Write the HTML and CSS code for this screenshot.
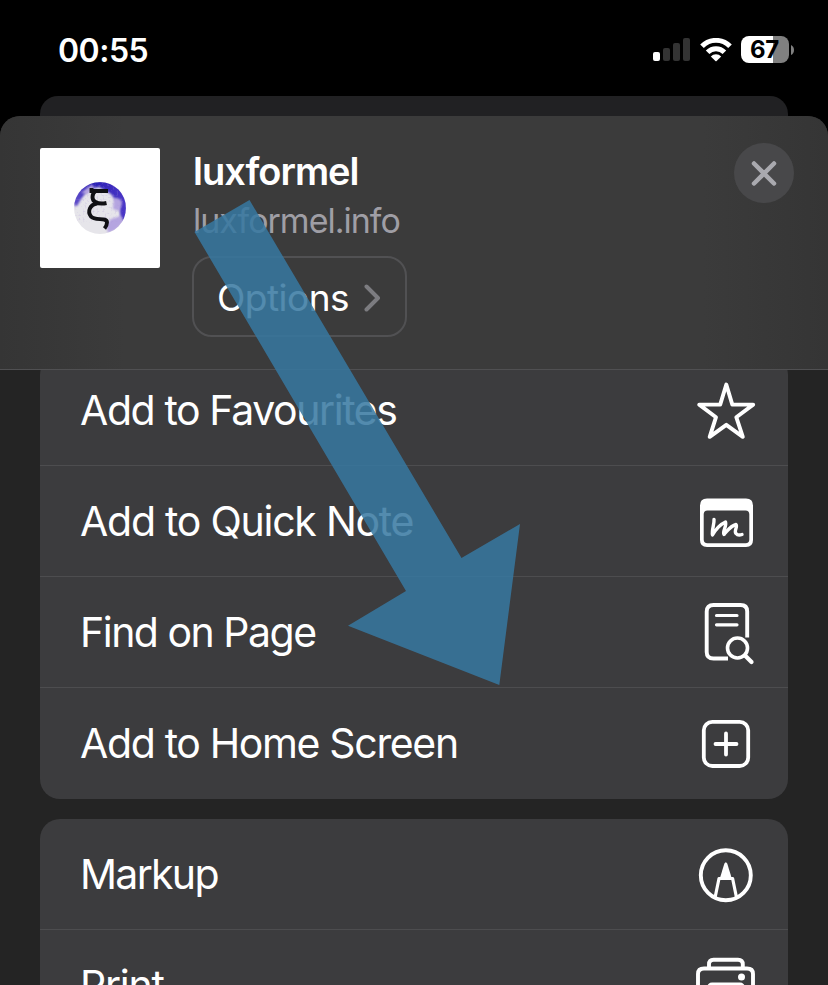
FILE: index.html
```html
<!DOCTYPE html>
<html lang="en">
<head>
<meta charset="utf-8">
<title>Share sheet</title>
<link rel="stylesheet" href="styles.css">
</head>
<body>
<div class="screen">
  <div class="status">
    <span class="time">00:55</span>
    <div class="indicators">
      <svg class="signal" width="38" height="24" viewBox="0 0 38 24">
        <rect x="0" y="14" width="7" height="9" rx="2" fill="#fff"/>
        <rect x="10" y="10" width="7" height="13" rx="2" fill="#333"/>
        <rect x="20" y="5" width="7" height="18" rx="2" fill="#333"/>
        <rect x="30" y="0" width="7" height="23" rx="2" fill="#333"/>
      </svg>
      <svg class="wifi" width="32" height="24" viewBox="0 0 32 24">
        <g fill="none" stroke="#fff" stroke-width="5">
          <path d="M2 8.300a19.500 19.500 0 0 1 28 0"/>
          <path d="M7.600 14.300a11.800 11.800 0 0 1 16.800 0"/>
        </g>
        <path d="M10.800 18.500a7.400 7.400 0 0 1 10.400 0L16.600 23.100q-.6.5-1.200 0Z" fill="#fff"/>
      </svg>
      <div class="battery"><span class="level">67</span></div>
      <svg class="cap" width="4" height="10" viewBox="0 0 4 10"><path d="M0 0q3 1.500 3 5t-3 5z" fill="#808080"/></svg>
    </div>
  </div>
  <div class="behind"></div>
  <div class="sheet">
    <header class="header">
      <div class="thumb">
        <svg width="54" height="54" viewBox="0 0 54 54">
          <defs>
            <clipPath id="disc"><circle cx="27" cy="27" r="26"/></clipPath>
            <linearGradient id="edge" x1="0" y1="0" x2="1" y2="0"><stop offset="0" stop-color="#6450cc"/><stop offset=".4" stop-color="#2a1fb4"/><stop offset="1" stop-color="#4d39c8"/></linearGradient>
            <filter id="soft"><feGaussianBlur stdDeviation="1"/></filter>
            <filter id="grain"><feTurbulence type="fractalNoise" baseFrequency=".5" numOctaves="2" seed="4"/><feColorMatrix values="0 0 0 0 .42 0 0 0 0 .3 0 0 0 0 .7 0 0 0 3 -1.6"/></filter>
          </defs>
          <g clip-path="url(#disc)">
            <rect width="54" height="54" fill="#e6e5ea"/>
            <path d="M0 24V0H54V40H48L46 24 38 13 26 6 15 9 8 18 4 25Z" fill="url(#edge)" filter="url(#soft)"/>
            <path d="M41 17q8-1 8 6l-3 7-6-2zM38 38l10-3 3 6-8 8-8 3-2-8zM8 12l10-8 4 2-8 7z" fill="#b5a5e0" filter="url(#soft)"/>
            <rect width="54" height="38" filter="url(#grain)" opacity=".35"/>
          </g>
          <path d="M18.500 7V10H35M22.500 10c-4 3-4 9 0 11q4 2.500 11 1M24 22.500c-7 1-10 8-6 13 4 5 16 0 16 6q0 3-2.500 6" fill="none" stroke="#101014" stroke-width="3.900"/>
        </svg>
      </div>
      <div class="info">
        <div class="name"><span>luxformel</span></div>
        <div class="domain"><span>luxformel.info</span></div>
        <div class="options">
          <span>Options</span>
          <svg width="18" height="28" viewBox="0 0 18 28"><path d="M2.500 2.500 14 14 2.500 25.500" fill="none" stroke="#7c7c80" stroke-width="4" stroke-linecap="round" stroke-linejoin="round"/></svg>
        </div>
      </div>
      <div class="close">
        <svg width="26" height="26" viewBox="0 0 26 26"><path d="M3 3.500 23 23.500M23 3.500 3 23.500" stroke="#a9a9af" stroke-width="4.500" stroke-linecap="round"/></svg>
      </div>
    </header>
    <main class="list">
      <section class="card">
        <div class="row"><span class="l1">Add to Favourites</span>
          <svg width="64" height="64" viewBox="0 0 64 64"><path d="M32.300 5.500 38.300 25.600 59.200 25.600 42.300 38.200 48.800 57.800 32.300 45.800 15.700 57.800 22 38.200 5.200 25.600 26.200 25.600Z" fill="none" stroke="#fff" stroke-width="3.900" stroke-linejoin="round"/></svg>
        </div>
        <div class="row"><span class="l2">Add to Quick Note</span>
          <svg width="64" height="64" viewBox="0 0 64 64"><path fill-rule="evenodd" fill="#fff" d="M13 8.500H52Q59 8.500 59 15.500V50Q59 57 52 57H13Q6 57 6 50V15.500Q6 8.500 13 8.500ZM13.500 20.500Q9.700 20.500 9.700 24.300V49.500Q9.700 53.300 13.500 53.300H51.500Q55.300 53.300 55.300 49.500V24.300Q55.300 20.500 51.500 20.500Z"/><path d="M20 29.500C20.500 34 17.500 40 18.500 45C22 39 27 34 31.500 32C33 36 28 42 30 44.500C34 40 37 35.500 42 34.500C44 37 39.500 41 42 43.500Q44 46 48 44.500" fill="none" stroke="#fff" stroke-width="3.400" stroke-linecap="round" stroke-linejoin="round"/></svg>
        </div>
        <div class="row"><span class="l3">Find on Page</span>
          <svg width="64" height="64" viewBox="0 0 64 64"><g fill="none" stroke="#fff" stroke-width="3.900"><path d="M34 57.500H19.500Q12.700 57.500 12.700 51V10.500Q12.700 4 19.500 4H46.500Q53.200 4 53.200 10.500V36.500"/><path d="M22.500 14.500H43M22.500 23.800H43" stroke-width="3.200" stroke-linecap="round"/><circle cx="43.500" cy="47" r="10" stroke-width="3.600"/><path d="M51 54.500 57.500 61" stroke-width="4.200" stroke-linecap="round"/></g></svg>
        </div>
        <div class="row"><span class="l4">Add to Home Screen</span>
          <svg width="64" height="64" viewBox="0 0 64 64"><g fill="none" stroke="#fff" stroke-width="3.800"><rect x="9.800" y="9.800" width="44.400" height="44.200" rx="8.500"/><path d="M32 21.500V42.500M21.500 32H42.500" stroke-linecap="round"/></g></svg>
        </div>
      </section>
      <section class="card">
        <div class="row"><span class="l5">Markup</span>
          <svg width="64" height="64" viewBox="0 0 64 64"><circle cx="31.800" cy="32.300" r="25" fill="none" stroke="#fff" stroke-width="3.900"/><path d="M25.500 36.500 30.300 20.800Q31.800 17.500 33.300 20.800L38.100 36.500Z" fill="#fff"/><path d="M21.200 54 25 35.500H38.600L42.400 54" fill="none" stroke="#fff" stroke-width="3.200" stroke-linejoin="round"/></svg>
        </div>
        <div class="row"><span class="l6">Print</span>
          <svg width="64" height="64" viewBox="0 0 64 64"><g fill="none" stroke="#fff" stroke-width="3.900"><path d="M15 15V10.500Q15 5.700 19.500 5.700H44Q48.800 5.700 48.800 10.500V15"/><path d="M15 47H9Q4 47 4 42V20Q4 14.500 10 14.500H53Q59 14.500 59 20V42Q59 47 54 47H49"/><rect x="15" y="30.500" width="34" height="26" rx="3"/></g><circle cx="47.500" cy="23" r="3.500" fill="#fff"/></svg>
        </div>
      </section>
    </main>
  </div>
  <svg class="arrow" width="828" height="985" viewBox="0 0 828 985"><path d="M249.500 200 461.500 558 520 524 499.300 685 348 625.700 406 591 194.500 232Z" fill="#3778a1" fill-opacity=".86"/></svg>
</div>
</body>
</html>
```
FILE: styles.css
```css
* { box-sizing: border-box; }
body { margin: 0; background: #000; font-family: Inter, "Liberation Sans", sans-serif; color: #fff; }
svg { display: block; flex: none; }
span { white-space: nowrap; }
.screen { position: relative; width: 828px; height: 985px; overflow: hidden; display: flex; flex-direction: column; background: #000; }
.status { height: 96px; flex: none; padding: 36px 33px 0 58px; display: flex; justify-content: space-between; align-items: flex-start; }
.time { font-size: 32px; line-height: 28px; padding-top: 1px; font-weight: 600; letter-spacing: -0.5px; }
.indicators { display: flex; align-items: center; height: 27px; }
.wifi { margin-left: 9px; }
.battery { width: 48px; height: 27px; margin-left: 9px; border-radius: 8px; background: linear-gradient(90deg, #fff 67%, #808080 67%); color: #000; text-align: center; }
.level { display: block; font-size: 24px; line-height: 28px; font-weight: 700; letter-spacing: -0.3px; padding-right: 1px; }
.cap { margin-left: 2px; }
.behind { height: 20px; flex: none; margin: 0 40px; border-radius: 18px 18px 0 0; background: #212123; }
.sheet { flex: 1; min-height: 0; display: flex; flex-direction: column; background: #242424; border-radius: 20px 20px 0 0; overflow: hidden; }
.header { height: 254px; flex: none; display: flex; padding: 32px 34px 0 40px; border-bottom: 1px solid #505052; background: linear-gradient(90deg, #353535, #3b3b3b 15%, #3b3b3b 85%, #353535); }
.thumb { width: 120px; height: 120px; border-radius: 2px; background: #fff; display: flex; align-items: center; justify-content: center; }
.info { margin-left: 32px; display: flex; flex-direction: column; align-items: flex-start; }
.name { font-size: 38px; line-height: 46px; font-weight: 600; letter-spacing: -1px; padding-left: 1px; }
.domain { font-size: 34px; line-height: 42px; margin-top: 6px; color: #9f9ea5; letter-spacing: -1px; padding-left: 1px; }
.options { width: 215px; height: 81px; margin-top: 14px; padding: 2px 23px 0 23px; border: 2px solid #515153; border-radius: 20px; display: flex; align-items: center; justify-content: space-between; font-size: 37px; letter-spacing: -0.5px; }
.close { width: 60px; height: 60px; margin: -5px 0 0 auto; border-radius: 50%; background: #48484a; display: flex; align-items: center; justify-content: center; }
.list { flex: 1; min-height: 0; overflow: hidden; padding: 0 40px; }
.card { border-radius: 20px; background: #3c3c3e; margin-bottom: 20px; overflow: hidden; }
.card:first-child { margin-top: -15px; }
.row { height: 111px; padding: 2px 30px 0 40px; display: flex; align-items: center; justify-content: space-between; border-bottom: 1px solid #4d4d4f; font-size: 41px; }
.row span { padding-bottom: 2px; }
.row:last-child { border-bottom-color: transparent; }
.l1 { letter-spacing: -1.4px; }
.l2 { letter-spacing: -1.25px; }
.l3 { letter-spacing: -1.5px; }
.l4 { letter-spacing: -1.35px; }
.l5 { letter-spacing: -1.7px; }
.l6 { letter-spacing: -1.2px; }
.arrow { position: absolute; left: 0; top: 0; }
```
